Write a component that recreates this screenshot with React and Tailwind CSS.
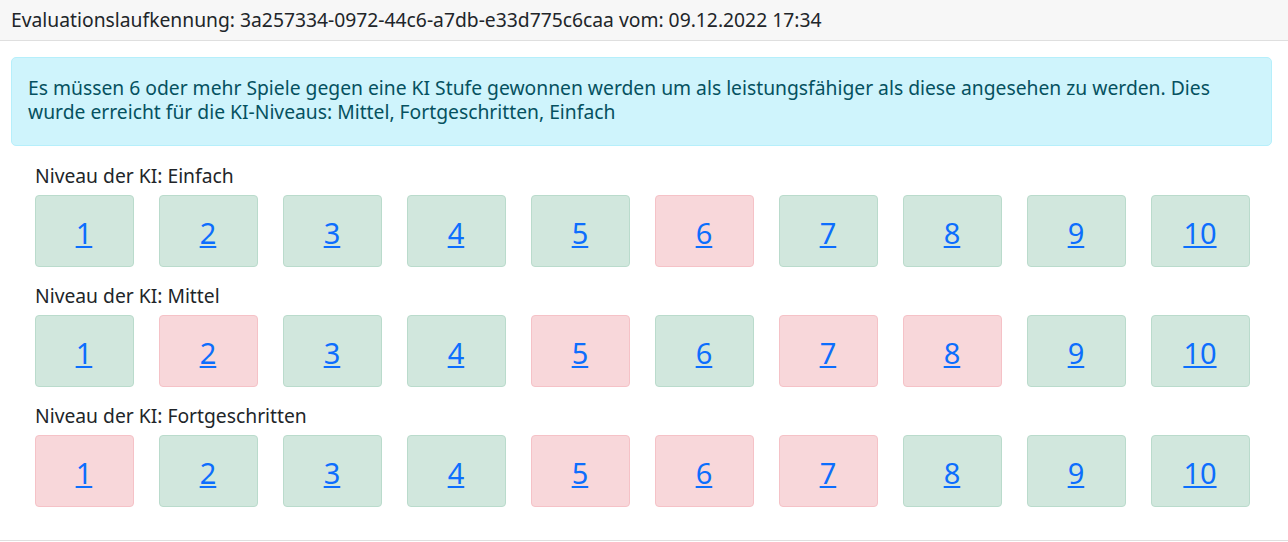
import React from "react";

const rows = [
  { name: "Einfach", res: [1,1,1,1,1,0,1,1,1,1] },
  { name: "Mittel", res: [1,0,1,1,0,1,0,0,1,1] },
  { name: "Fortgeschritten", res: [0,1,1,1,0,0,0,1,1,1] },
];

export default function App() {
  return (
    <div className="w-[1288px] h-[542px] bg-white text-[#212529] overflow-hidden" style={{ fontFamily: '"Noto Sans", sans-serif' }}>
      <div className="h-[541px] border-b border-[#dfdfdf] flex flex-col">
        <div className="h-[41px] bg-[#f7f7f7] border-b border-[#dfdfdf] flex items-center pl-[11px] text-[19.3px]">
          Evaluationslaufkennung: 3a257334-0972-44c6-a7db-e33d775c6caa vom: 09.12.2022 17:34
        </div>
        <div className="pl-[11px] pr-[16px] pt-[16px]">
          <div className="bg-[#cff4fc] border border-[#b6effb] text-[#055160] rounded-[5px] px-[16px] pt-[18px] pb-[21px] text-[19.3px] leading-[24px]">
            Es müssen 6 oder mehr Spiele gegen eine KI Stufe gewonnen werden um als leistungsfähiger als diese angesehen zu werden. Dies wurde erreicht für die KI-Niveaus: Mittel, Fortgeschritten, Einfach
          </div>
        </div>
        <div className="pl-[22px] w-[1262px] pt-[18px] flex flex-col gap-[17px]">
          {rows.map((r) => (
            <div key={r.name} className="flex flex-col">
              <div className="px-[13px] text-[19.3px] leading-[24px] mb-[7px]">Niveau der KI: {r.name}</div>
              <div className="grid grid-cols-10">
                {r.res.map((w, i) => (
                  <div key={i} className="px-[12.5px]">
                    <div className={`h-[72px] rounded-[4px] border flex items-center justify-center ${w ? "bg-[#d1e7dd] border-[#badbcc]" : "bg-[#f8d7da] border-[#f5c2c7]"}`}>
                      <a href="#" className="text-[#0d6efd] underline text-[29px] leading-none mt-[3px]">{i + 1}</a>
                    </div>
                  </div>
                ))}
              </div>
            </div>
          ))}
        </div>
      </div>
    </div>
  );
}
